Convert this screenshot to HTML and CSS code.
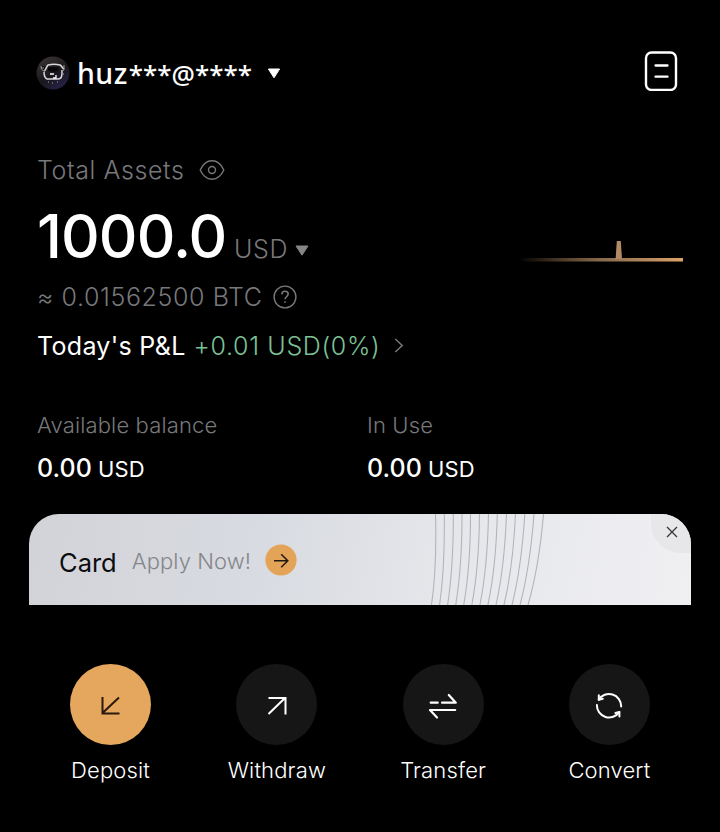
FILE: index.html
```
<!DOCTYPE html>
<html lang="en">
<head>
    <meta charset="UTF-8">
    <meta name="viewport" content="width=device-width, initial-scale=1.0">
    <title>Assets</title>
    <link rel="stylesheet" href="styles.css">
</head>
<body>

    <!-- Header -->
    <header class="header">
        <div class="account">
            <svg class="avatar" width="34" height="34" viewBox="0 0 34 34" fill="none">
                <defs>
                    <linearGradient id="avatarBg" x1="0.2" y1="0" x2="0.8" y2="1">
                        <stop offset="0" stop-color="#3a3434"/>
                        <stop offset="0.55" stop-color="#19171c"/>
                        <stop offset="1" stop-color="#28224c"/>
                    </linearGradient>
                </defs>
                <circle cx="17" cy="17" r="16.5" fill="url(#avatarBg)"/>
                <path d="M6 10l5 1-2 4c-3 0-4-2-3-5zM12 11h11l-1 4-5 1-5-1z" fill="#08080a"/>
                <path d="M8 15c2-1 2-4 4-6 4-1 8-1 12 0 2 1 2 3 4 4M8 16c0 4 1 6 3 7h11c4 0 4-3 4-9" stroke="#d8d6d8" stroke-width="1.5"/>
                <path d="M5 10c0 3 1 5 4 5M28 9v5l-2 1M5 12h3" stroke="#9a979c"/>
                <path d="M14 18h4M20 19v3h-3" stroke="#fff" stroke-width="1.3"/>
                <path d="M12 26h1M16 27h1M21 26h1M27 18h1" stroke="#aaa8b4"/>
            </svg>
            <span class="account-name">huz<span class="mask">***@****</span></span>
            <svg width="14" height="11" viewBox="0 0 14 11"><path d="M1.4 1h11.2L7 9.8z" fill="#fff" stroke="#fff" stroke-linejoin="round"/></svg>
        </div>
        <svg width="34" height="40" viewBox="0 0 34 40" fill="none" stroke="#fff">
            <rect x="2" y="1.5" width="30" height="37.5" rx="5.5" stroke-width="2.4"/>
            <path d="M11.5 14.5h12M11.5 25.7h12" stroke-width="2.3" stroke-linecap="round"/>
        </svg>
    </header>

    <!-- Total assets -->
    <section class="assets">
        <div class="row total-label">
            <span>Total Assets</span>
            <svg width="26" height="22" viewBox="0 0 26 22" fill="none" stroke="#77787a" stroke-width="1.4">
                <path d="M1.2 11C4 4.800 8 1.800 13 1.800S22 4.800 24.800 11C22 17.200 18 20.200 13 20.200S4 17.200 1.200 11z" stroke-linejoin="round"/>
                <circle cx="13" cy="11" r="3.500"/>
            </svg>
        </div>
        <div class="amount-row">
            <div class="amount-box">
                <span class="amount">1000.0</span>
                <span class="currency">USD</span>
                <svg width="14" height="13" viewBox="0 0 14 13"><path d="M1 1h12L7 10.200z" fill="#858688" stroke="#858688" stroke-linejoin="round"/></svg>
            </div>
            <svg class="chart" width="164" height="24" viewBox="0 0 164 24">
                <defs>
                    <linearGradient id="chartLine" x1="0" x2="1" y1="0" y2="0">
                        <stop offset="0" stop-color="#c9955f" stop-opacity="0"/>
                        <stop offset="0.5" stop-color="#a98560" stop-opacity="0.8"/>
                        <stop offset="1" stop-color="#dda468"/>
                    </linearGradient>
                </defs>
                <rect x="0" y="18" width="164" height="3.500" fill="url(#chartLine)"/>
                <path d="M97.800 1h4l1.200 18h-6.400z" fill="#b28a63"/>
            </svg>
        </div>
        <div class="row btc">
            <span>≈ 0.01562500 BTC</span>
            <svg width="24" height="24" viewBox="0 0 24 24" fill="none" stroke="#77787a" stroke-width="1.4">
                <circle cx="12" cy="12" r="10.900"/>
                <path d="M8.800 9.400C8.900 7.400 10.200 6.300 12 6.300s3.200 1.100 3.200 2.800c0 2.300-3.200 2.600-3.200 5.100M12 16.200v1.600" stroke-width="1.600"/>
            </svg>
        </div>
        <div class="row pnl">
            <span class="pnl-label">Today's P&amp;L</span>
            <span class="pnl-value">+0.01 USD(0%)</span>
            <svg width="10" height="16" viewBox="0 0 10 16" fill="none" stroke="#77787a" stroke-width="1.500"><path d="M1.300 1L8.200 7.500l-6.900 6.500"/></svg>
        </div>
    </section>

    <section class="balances">
        <div class="balance">
            <div class="balance-label">Available balance</div>
            <div class="balance-value"><b>0.00</b> <span>USD</span></div>
        </div>
        <div class="balance">
            <div class="balance-label">In Use</div>
            <div class="balance-value"><b>0.00</b> <span>USD</span></div>
        </div>
    </section>

    <!-- Card banner -->
    <section class="banner">
        <span class="banner-title">Card</span>
        <span class="banner-text">Apply Now!</span>
        <svg class="banner-go" width="32" height="32" viewBox="0 0 32 32" fill="none">
            <circle cx="16" cy="16" r="15.600" fill="#e4a458"/>
            <path d="M9 16.700h13.500M16.200 10.200l6.600 6.500-6.600 6.500" stroke="#21180f" stroke-width="1.500"/>
        </svg>
        <svg class="banner-lines" width="116" height="91" viewBox="0 0 116 91" fill="none" stroke="#b3b4ba" stroke-width="1.100">
            <path d="M6.500 0Q8 53 2.500 91"/>
            <path d="M15.300 0Q16 53 10.600 91"/>
            <path d="M24.300 0Q24.500 53 18.600 91"/>
            <path d="M33 0Q33 53 26.700 91"/>
            <path d="M41.500 0Q41.500 53 34.700 91"/>
            <path d="M50.500 0Q50 53 42.800 91"/>
            <path d="M59.500 0Q58.500 53 50.900 91"/>
            <path d="M68.300 0Q67 53 58.900 91"/>
            <path d="M77.500 0Q75.500 53 67 91"/>
            <path d="M86.500 0Q84 53 75 91"/>
            <path d="M95.800 0Q92.500 53 83 91"/>
            <path d="M105 0Q101 53 91 91"/>
            <path d="M114.500 0Q110 53 99 91"/>
        </svg>
        <div class="banner-close">
            <svg width="12" height="12" viewBox="0 0 12 12" stroke="#35353b" stroke-width="1.300"><path d="M1 1l10 10M11 1L1 11"/></svg>
        </div>
    </section>

    <!-- Actions -->
    <nav class="actions">
        <div class="action">
            <div class="action-icon deposit">
                <svg width="30" height="30" viewBox="0 0 30 30" fill="none" stroke="#2a190c" stroke-width="2"><path d="M23 7.500L6.500 23M6.500 7v16.500H23.500"/></svg>
            </div>
            <span>Deposit</span>
        </div>
        <div class="action">
            <div class="action-icon">
                <svg width="30" height="30" viewBox="0 0 30 30" fill="none" stroke="#fff" stroke-width="2"><path d="M6.500 24L23 8M6.500 8h17v16.500"/></svg>
            </div>
            <span>Withdraw</span>
        </div>
        <div class="action">
            <div class="action-icon">
                <svg width="30" height="30" viewBox="0 0 30 30" fill="none" stroke="#fff" stroke-width="2.200" stroke-linecap="round" stroke-linejoin="round"><path d="M2.700 12.700h7M14 12.700h13.800l-7-7.700M27.200 20H2l7 7.500"/></svg>
            </div>
            <span>Transfer</span>
        </div>
        <div class="action">
            <div class="action-icon">
                <svg width="30" height="30" viewBox="0 0 30 30" fill="none" stroke="#fff" stroke-width="2" stroke-linecap="round" stroke-linejoin="round">
                    <path d="M4.700 9.700A12.200 12.200 0 0 1 27.200 16.500M25.300 22A12.200 12.200 0 0 1 2.900 15"/>
                    <path d="M4.800 5.200v4.500l4-1M25.400 26.500v-4.500l-4 1"/>
                </svg>
            </div>
            <span>Convert</span>
        </div>
    </nav>

</body>
</html>
```
FILE: styles.css
```
* {
    margin: 0;
    padding: 0;
    box-sizing: border-box;
}

body {
    font-family: Inter, 'Liberation Sans', sans-serif;
    font-weight: 300;
    background-color: #000;
    color: #fff;
    height: 832px;
    padding-top: 51px;
    overflow: hidden;
}

svg {
    display: block;
    flex-shrink: 0;
}

.header {
    display: flex;
    justify-content: space-between;
    height: 40px;
    padding: 0 42px 0 36px;
}

.account {
    display: flex;
    align-items: center;
    height: 44px;
}

.account-name {
    font-family: 'Noto Sans', sans-serif;
    font-weight: 500;
    font-size: 28.5px;
    line-height: 44px;
    letter-spacing: 0.5px;
    width: 177px;
    margin: 0 13px 0 7px;
    white-space: nowrap;
}

.mask {
    font-size: 26px;
    letter-spacing: 0;
    margin-left: 1px;
}

.assets {
    padding: 64px 37px 0;
}

.row {
    display: flex;
    align-items: center;
    height: 30px;
    font-size: 25px;
    line-height: 30px;
    white-space: nowrap;
}

.total-label {
    color: #77787a;
    gap: 15px;
    letter-spacing: 0.6px;
}

.amount-row {
    display: flex;
    justify-content: space-between;
    margin-top: 21px;
    height: 60px;
}

.amount-box {
    display: flex;
    align-items: baseline;
    line-height: 60px;
}

.amount {
    font-size: 60px;
    font-weight: 550;
    letter-spacing: -0.9px;
    width: 188px;
}

.currency {
    color: #77787a;
    font-size: 25px;
    letter-spacing: 0.6px;
    margin: 0 7px 0 9px;
}

.chart {
    margin-top: 34px;
}

.btc {
    margin-top: 16px;
    color: #77787a;
    gap: 10px;
    letter-spacing: 0.6px;
}

.pnl {
    margin-top: 19px;
}

.pnl-label {
    font-weight: 400;
    letter-spacing: 0.3px;
    margin-right: 8px;
}

.pnl-value {
    color: #7cc096;
    letter-spacing: 0.65px;
    margin-right: 14px;
}

.balances {
    display: grid;
    grid-template-columns: 330px 1fr;
    padding: 50px 37px 0;
}

.balance-label {
    color: #77787a;
    font-size: 22px;
    line-height: 28px;
    letter-spacing: 0.15px;
}

.balance-value {
    margin-top: 14px;
    font-size: 22px;
    font-weight: 400;
    line-height: 30px;
    letter-spacing: 0.05px;
}

.balance-value b {
    font-size: 25px;
    font-weight: 550;
}

.banner {
    position: relative;
    display: flex;
    align-items: center;
    height: 91px;
    margin: 30px 29px 0;
    padding-left: 30px;
    border-radius: 30px 30px 0 0;
    background: linear-gradient(100deg, #d2d3d8 0%, #d8dbe1 35%, #e5e6ea 62%, #f0f0f3 100%);
    overflow: hidden;
}

.banner-title {
    color: #0c0c0e;
    font-size: 25.5px;
    font-weight: 400;
    margin: 6px 15px 0 0;
}

.banner-text {
    color: #85868a;
    font-size: 22px;
    letter-spacing: 0.1px;
    margin: 3px 14px 0 0;
}

.banner-lines {
    margin-left: auto;
    margin-right: 146px;
}

.banner-close {
    position: absolute;
    top: -1px;
    right: -1px;
    width: 41px;
    height: 40px;
    padding: 13px 0 0 15px;
    border-radius: 0 0 0 30px;
    background-color: #e7e7ea;
}

.actions {
    display: grid;
    grid-template-columns: repeat(4, 166.3px);
    justify-content: center;
    margin-top: 59px;
}

.action {
    display: flex;
    flex-direction: column;
    align-items: center;
    gap: 10px;
    font-size: 22px;
    line-height: 30px;
    letter-spacing: 0.15px;
}

.action-icon {
    display: flex;
    align-items: center;
    justify-content: center;
    width: 81px;
    height: 81px;
    border-radius: 50%;
    background-color: #161616;
}

.deposit {
    background-color: #e5a65e;
}
```
